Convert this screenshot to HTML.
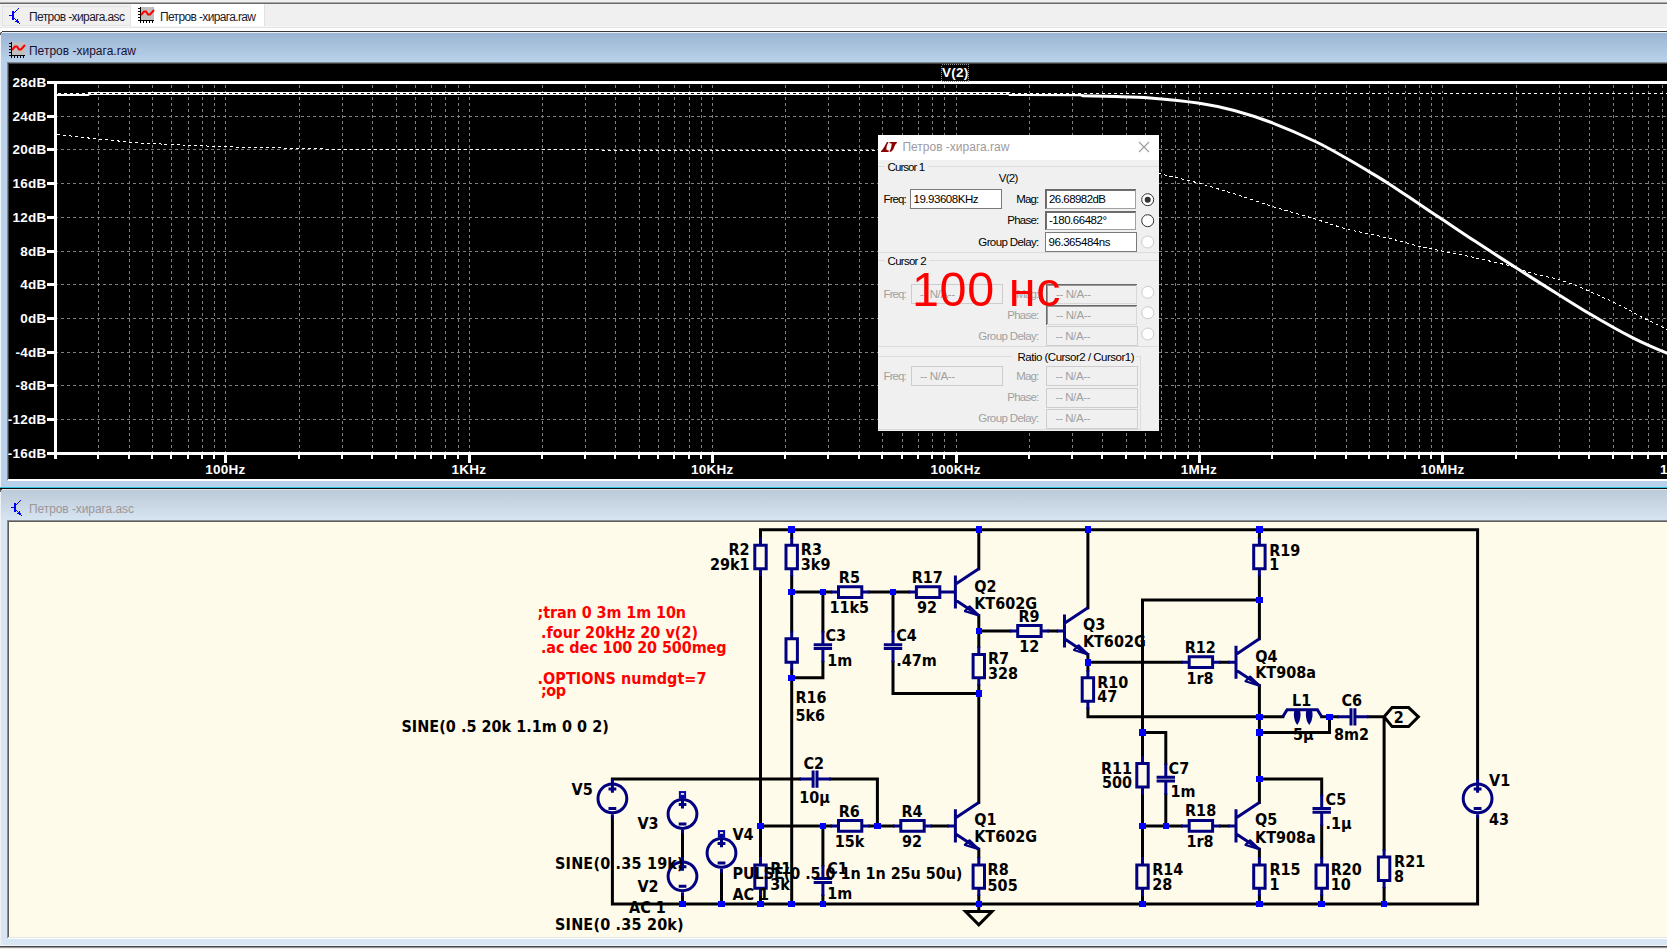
<!DOCTYPE html><html><head><meta charset="utf-8"><title>LTspice</title><style>
html,body{margin:0;padding:0}
body{width:1667px;height:949px;overflow:hidden;background:#f0f0f0;position:relative;font-family:"Liberation Sans",sans-serif}
.abs{position:absolute}
svg{position:absolute;left:0;top:0;overflow:visible}
text{white-space:pre}
.ui{font:12px "Liberation Sans",sans-serif}
.pl{font:bold 13.5px "Liberation Sans",sans-serif;fill:#fff;letter-spacing:0.25px}
.sc{font:bold 16px "DejaVu Sans Condensed","DejaVu Sans","Liberation Sans",sans-serif;fill:#000}
.dl{font:11.5px "Liberation Sans",sans-serif;fill:#000}
</style></head><body>
<div class="abs" style="left:0px;top:0px;width:1667px;height:2px;background:#efefef;"></div>
<div class="abs" style="left:0px;top:2px;width:1667px;height:1px;background:#a8a8a8;"></div>
<div class="abs" style="left:0px;top:3px;width:1667px;height:1px;background:#6a6a6a;"></div>
<div class="abs" style="left:0px;top:4px;width:1667px;height:24px;background:#f0f0f0;"></div>
<div class="abs" style="left:2px;top:6px;width:129px;height:20px;background:#f0f0f0;box-sizing:border-box;border:1px solid #e2e2e2;"></div>
<div class="abs" style="left:131px;top:4px;width:133px;height:22px;background:#ffffff;"></div>
<div class="abs" style="left:264px;top:5px;width:1px;height:21px;background:#e0e0e0;"></div>
<div class="abs" style="left:0px;top:26px;width:1667px;height:1px;background:#f6f6f6;"></div>
<div class="abs" style="left:0px;top:27px;width:1667px;height:1px;background:#e4e4e4;"></div>
<div class="abs" style="left:0px;top:28px;width:1667px;height:3px;background:#ffffff;"></div>
<div class="abs" style="left:0px;top:31px;width:1667px;height:1px;background:#3c3c3c;"></div>
<div class="abs" style="left:0px;top:32px;width:1667px;height:1px;background:#e8eef6;"></div>
<div class="abs" style="left:0px;top:33px;width:1667px;height:29px;background:linear-gradient(#9ab4d3,#bad2ea);"></div>
<div class="abs" style="left:0px;top:62px;width:1667px;height:419px;background:#b9d1ea;"></div>
<div class="abs" style="left:0px;top:33px;width:1px;height:454px;background:#f0f3f7;"></div>
<div class="abs" style="left:7px;top:62px;width:1660px;height:1px;background:#7c8894;"></div>
<div class="abs" style="left:7px;top:62px;width:1px;height:418px;background:#808890;"></div>
<div class="abs" style="left:8px;top:63px;width:1659px;height:1px;background:#404040;"></div>
<div class="abs" style="left:8px;top:63px;width:1px;height:417px;background:#404040;"></div>
<div class="abs" style="left:9px;top:64px;width:1658px;height:415px;background:#000;"></div>
<div class="abs" style="left:8px;top:479px;width:1659px;height:2px;background:#ffffff;"></div>
<div class="abs" style="left:0px;top:481px;width:1667px;height:6px;background:#b9d1ea;"></div>
<div class="abs" style="left:0px;top:487px;width:1667px;height:1px;background:#2fc3dc;"></div>
<div class="abs" style="left:0px;top:488px;width:1667px;height:1px;background:#101010;"></div>
<div class="abs" style="left:0px;top:481px;width:1px;height:6px;background:#f0f3f7;"></div>
<div class="abs" style="left:0px;top:31px;width:2px;height:1px;background:#ffffff;"></div>
<div class="abs" style="left:1px;top:32px;width:1px;height:1px;background:#555;"></div>
<div class="abs" style="left:0px;top:32px;width:1px;height:1px;background:#aaa;"></div>
<div class="abs" style="left:0px;top:33px;width:1px;height:2px;background:#555;"></div>
<div class="abs" style="left:0px;top:489px;width:1667px;height:1px;background:#dfe6ee;"></div>
<div class="abs" style="left:0px;top:490px;width:1667px;height:30px;background:linear-gradient(#bccad9,#d7e4f1);"></div>
<div class="abs" style="left:0px;top:520px;width:1667px;height:426px;background:#d8e5f3;"></div>
<div class="abs" style="left:0px;top:490px;width:1px;height:456px;background:#eef1f5;"></div>
<div class="abs" style="left:0px;top:489px;width:2px;height:1px;background:#444;"></div>
<div class="abs" style="left:0px;top:490px;width:1px;height:2px;background:#666;"></div>
<div class="abs" style="left:7px;top:520px;width:1660px;height:1px;background:#8a8d90;"></div>
<div class="abs" style="left:7px;top:520px;width:1px;height:418px;background:#8a8d90;"></div>
<div class="abs" style="left:8px;top:521px;width:1659px;height:1px;background:#5c5c5c;"></div>
<div class="abs" style="left:8px;top:521px;width:1px;height:416px;background:#5c5c5c;"></div>
<div class="abs" style="left:9px;top:522px;width:1658px;height:415px;background:#fffbeb;"></div>
<div class="abs" style="left:8px;top:937px;width:1659px;height:1px;background:#e6e6e6;"></div>
<div class="abs" style="left:8px;top:938px;width:1659px;height:1px;background:#ffffff;"></div>
<div class="abs" style="left:0px;top:945px;width:1667px;height:1px;background:#f2f5fa;"></div>
<div class="abs" style="left:0px;top:946px;width:1667px;height:1px;background:#444444;"></div>
<div class="abs" style="left:0px;top:947px;width:1667px;height:1px;background:#9a9a9a;"></div>
<div class="abs" style="left:0px;top:948px;width:1667px;height:1px;background:#e8e8e8;"></div>
<svg width="1667" height="949"><g transform="translate(7,7)" fill="#0000ff" shape-rendering="crispEdges"><rect x="2" y="8" width="1" height="1"/><rect x="3" y="8" width="1" height="1"/><rect x="4" y="8" width="1" height="1"/><rect x="5" y="4" width="1" height="1"/><rect x="5" y="5" width="1" height="1"/><rect x="5" y="6" width="1" height="1"/><rect x="5" y="7" width="1" height="1"/><rect x="5" y="8" width="1" height="1"/><rect x="5" y="9" width="1" height="1"/><rect x="5" y="10" width="1" height="1"/><rect x="5" y="11" width="1" height="1"/><rect x="5" y="12" width="1" height="1"/><rect x="6" y="4" width="1" height="1"/><rect x="6" y="5" width="1" height="1"/><rect x="6" y="6" width="1" height="1"/><rect x="6" y="7" width="1" height="1"/><rect x="6" y="8" width="1" height="1"/><rect x="6" y="9" width="1" height="1"/><rect x="6" y="10" width="1" height="1"/><rect x="6" y="11" width="1" height="1"/><rect x="6" y="12" width="1" height="1"/><rect x="7" y="5" width="1" height="1"/><rect x="8" y="4" width="1" height="1"/><rect x="9" y="3" width="1" height="1"/><rect x="10" y="2" width="1" height="1"/><rect x="11" y="1" width="1" height="1"/><rect x="7" y="11" width="1" height="1"/><rect x="8" y="12" width="1" height="1"/><rect x="9" y="13" width="1" height="1"/><rect x="10" y="14" width="1" height="1"/><rect x="11" y="15" width="1" height="1"/><rect x="12" y="16" width="1" height="1"/><rect x="10" y="12" width="1" height="1"/><rect x="10" y="13" width="1" height="1"/><rect x="8" y="14" width="1" height="1"/><rect x="9" y="14" width="1" height="1"/><rect x="10" y="15" width="1" height="1"/><rect x="11" y="14" width="1" height="1"/></g><g transform="translate(138,7)" shape-rendering="crispEdges"><rect x="3" y="0" width="13" height="13" fill="#c0c0c0"/><rect x="2" y="0" width="1" height="16" fill="#000"/><rect x="0" y="13" width="16" height="1" fill="#000"/><rect x="0" y="1" width="2" height="1" fill="#000"/><rect x="2" y="14" width="1" height="2" fill="#000"/><rect x="0" y="4" width="2" height="1" fill="#000"/><rect x="5" y="14" width="1" height="2" fill="#000"/><rect x="0" y="7" width="2" height="1" fill="#000"/><rect x="8" y="14" width="1" height="2" fill="#000"/><rect x="0" y="10" width="2" height="1" fill="#000"/><rect x="11" y="14" width="1" height="2" fill="#000"/><rect x="0" y="13" width="2" height="1" fill="#000"/><rect x="14" y="14" width="1" height="2" fill="#000"/><polyline points="3,8 6,4.5 8,4.5 10,7.5 12,7.5 16,3" fill="none" stroke="#ff0000" stroke-width="2" shape-rendering="auto"/></g><g transform="translate(9,42)" shape-rendering="crispEdges"><rect x="3" y="0" width="13" height="13" fill="#c0c0c0"/><rect x="2" y="0" width="1" height="16" fill="#000"/><rect x="0" y="13" width="16" height="1" fill="#000"/><rect x="0" y="1" width="2" height="1" fill="#000"/><rect x="2" y="14" width="1" height="2" fill="#000"/><rect x="0" y="4" width="2" height="1" fill="#000"/><rect x="5" y="14" width="1" height="2" fill="#000"/><rect x="0" y="7" width="2" height="1" fill="#000"/><rect x="8" y="14" width="1" height="2" fill="#000"/><rect x="0" y="10" width="2" height="1" fill="#000"/><rect x="11" y="14" width="1" height="2" fill="#000"/><rect x="0" y="13" width="2" height="1" fill="#000"/><rect x="14" y="14" width="1" height="2" fill="#000"/><polyline points="3,8 6,4.5 8,4.5 10,7.5 12,7.5 16,3" fill="none" stroke="#ff0000" stroke-width="2" shape-rendering="auto"/></g><g transform="translate(9,499)" fill="#0000ff" shape-rendering="crispEdges"><rect x="2" y="8" width="1" height="1"/><rect x="3" y="8" width="1" height="1"/><rect x="4" y="8" width="1" height="1"/><rect x="5" y="4" width="1" height="1"/><rect x="5" y="5" width="1" height="1"/><rect x="5" y="6" width="1" height="1"/><rect x="5" y="7" width="1" height="1"/><rect x="5" y="8" width="1" height="1"/><rect x="5" y="9" width="1" height="1"/><rect x="5" y="10" width="1" height="1"/><rect x="5" y="11" width="1" height="1"/><rect x="5" y="12" width="1" height="1"/><rect x="6" y="4" width="1" height="1"/><rect x="6" y="5" width="1" height="1"/><rect x="6" y="6" width="1" height="1"/><rect x="6" y="7" width="1" height="1"/><rect x="6" y="8" width="1" height="1"/><rect x="6" y="9" width="1" height="1"/><rect x="6" y="10" width="1" height="1"/><rect x="6" y="11" width="1" height="1"/><rect x="6" y="12" width="1" height="1"/><rect x="7" y="5" width="1" height="1"/><rect x="8" y="4" width="1" height="1"/><rect x="9" y="3" width="1" height="1"/><rect x="10" y="2" width="1" height="1"/><rect x="11" y="1" width="1" height="1"/><rect x="7" y="11" width="1" height="1"/><rect x="8" y="12" width="1" height="1"/><rect x="9" y="13" width="1" height="1"/><rect x="10" y="14" width="1" height="1"/><rect x="11" y="15" width="1" height="1"/><rect x="12" y="16" width="1" height="1"/><rect x="10" y="12" width="1" height="1"/><rect x="10" y="13" width="1" height="1"/><rect x="8" y="14" width="1" height="1"/><rect x="9" y="14" width="1" height="1"/><rect x="10" y="15" width="1" height="1"/><rect x="11" y="14" width="1" height="1"/></g><text x="29.0" y="21.0" class="ui" textLength="96.0" style="fill:#1a1a2a">Петров -хирага.asc</text><text x="160.0" y="21.0" class="ui" textLength="96.0" style="fill:#1a1a2a">Петров -хирага.raw</text><text x="29.0" y="55.0" class="ui" textLength="107.0" style="fill:#1a1030">Петров -хирага.raw</text><text x="29.0" y="513.0" class="ui" textLength="105.0" style="fill:#9c9799">Петров -хирага.asc</text></svg>
<svg width="1667" height="949"><defs><clipPath id="pc"><rect x="57" y="84" width="1610" height="368"/></clipPath></defs><path d="M98.5 85V452M129.5 85V452M152.5 85V452M171.5 85V452M188.5 85V452M202.5 85V452M214.5 85V452M225.5 85V452M299.5 85V452M342.5 85V452M372.5 85V452M396.5 85V452M415.5 85V452M431.5 85V452M445.5 85V452M458.5 85V452M469.5 85V452M542.5 85V452M585.5 85V452M615.5 85V452M639.5 85V452M658.5 85V452M674.5 85V452M689.5 85V452M701.5 85V452M712.5 85V452M785.5 85V452M828.5 85V452M859.5 85V452M882.5 85V452M902.5 85V452M918.5 85V452M932.5 85V452M944.5 85V452M956.5 85V452M1029.5 85V452M1072.5 85V452M1102.5 85V452M1126.5 85V452M1145.5 85V452M1161.5 85V452M1175.5 85V452M1188.5 85V452M1199.5 85V452M1272.5 85V452M1315.5 85V452M1346.5 85V452M1369.5 85V452M1388.5 85V452M1405.5 85V452M1419.5 85V452M1431.5 85V452M1442.5 85V452M1516.5 85V452M1559.5 85V452M1589.5 85V452M1613.5 85V452M1632.5 85V452M1648.5 85V452M1662.5 85V452" stroke="#808080" stroke-width="1" stroke-dasharray="3 3" fill="none" shape-rendering="crispEdges"/><path d="M57 116.5H1667M57 149.5H1667M57 183.5H1667M57 217.5H1667M57 251.5H1667M57 284.5H1667M57 318.5H1667M57 352.5H1667M57 385.5H1667M57 419.5H1667" stroke="#808080" stroke-width="1" stroke-dasharray="3 3" stroke-dashoffset="2" fill="none" shape-rendering="crispEdges"/><g fill="#fff" shape-rendering="crispEdges"><rect x="54" y="81" width="3" height="374"/><rect x="47" y="81" width="1620" height="3"/><rect x="47" y="452" width="1620" height="3"/><rect x="47" y="115" width="8" height="3"/><rect x="47" y="148" width="8" height="3"/><rect x="47" y="182" width="8" height="3"/><rect x="47" y="216" width="8" height="3"/><rect x="47" y="250" width="8" height="3"/><rect x="47" y="283" width="8" height="3"/><rect x="47" y="317" width="8" height="3"/><rect x="47" y="351" width="8" height="3"/><rect x="47" y="384" width="8" height="3"/><rect x="47" y="418" width="8" height="3"/><rect x="54" y="455" width="2" height="4"/><rect x="97" y="455" width="2" height="4"/><rect x="128" y="455" width="2" height="4"/><rect x="151" y="455" width="2" height="4"/><rect x="170" y="455" width="2" height="4"/><rect x="187" y="455" width="2" height="4"/><rect x="201" y="455" width="2" height="4"/><rect x="213" y="455" width="2" height="4"/><rect x="224" y="455" width="3" height="8"/><rect x="298" y="455" width="2" height="4"/><rect x="341" y="455" width="2" height="4"/><rect x="371" y="455" width="2" height="4"/><rect x="395" y="455" width="2" height="4"/><rect x="414" y="455" width="2" height="4"/><rect x="430" y="455" width="2" height="4"/><rect x="444" y="455" width="2" height="4"/><rect x="457" y="455" width="2" height="4"/><rect x="468" y="455" width="3" height="8"/><rect x="541" y="455" width="2" height="4"/><rect x="584" y="455" width="2" height="4"/><rect x="614" y="455" width="2" height="4"/><rect x="638" y="455" width="2" height="4"/><rect x="657" y="455" width="2" height="4"/><rect x="673" y="455" width="2" height="4"/><rect x="688" y="455" width="2" height="4"/><rect x="700" y="455" width="2" height="4"/><rect x="711" y="455" width="3" height="8"/><rect x="784" y="455" width="2" height="4"/><rect x="827" y="455" width="2" height="4"/><rect x="858" y="455" width="2" height="4"/><rect x="881" y="455" width="2" height="4"/><rect x="901" y="455" width="2" height="4"/><rect x="917" y="455" width="2" height="4"/><rect x="931" y="455" width="2" height="4"/><rect x="943" y="455" width="2" height="4"/><rect x="955" y="455" width="3" height="8"/><rect x="1028" y="455" width="2" height="4"/><rect x="1071" y="455" width="2" height="4"/><rect x="1101" y="455" width="2" height="4"/><rect x="1125" y="455" width="2" height="4"/><rect x="1144" y="455" width="2" height="4"/><rect x="1160" y="455" width="2" height="4"/><rect x="1174" y="455" width="2" height="4"/><rect x="1187" y="455" width="2" height="4"/><rect x="1198" y="455" width="3" height="8"/><rect x="1271" y="455" width="2" height="4"/><rect x="1314" y="455" width="2" height="4"/><rect x="1345" y="455" width="2" height="4"/><rect x="1368" y="455" width="2" height="4"/><rect x="1387" y="455" width="2" height="4"/><rect x="1404" y="455" width="2" height="4"/><rect x="1418" y="455" width="2" height="4"/><rect x="1430" y="455" width="2" height="4"/><rect x="1441" y="455" width="3" height="8"/><rect x="1515" y="455" width="2" height="4"/><rect x="1558" y="455" width="2" height="4"/><rect x="1588" y="455" width="2" height="4"/><rect x="1612" y="455" width="2" height="4"/><rect x="1631" y="455" width="2" height="4"/><rect x="1647" y="455" width="2" height="4"/><rect x="1661" y="455" width="2" height="4"/><rect x="54" y="455" width="3" height="4"/></g><text x="46.6" y="86.9" class="pl" text-anchor="end">28dB</text><text x="46.6" y="120.9" class="pl" text-anchor="end">24dB</text><text x="46.6" y="153.9" class="pl" text-anchor="end">20dB</text><text x="46.6" y="187.9" class="pl" text-anchor="end">16dB</text><text x="46.6" y="221.9" class="pl" text-anchor="end">12dB</text><text x="46.6" y="255.9" class="pl" text-anchor="end">8dB</text><text x="46.6" y="288.9" class="pl" text-anchor="end">4dB</text><text x="46.6" y="322.9" class="pl" text-anchor="end">0dB</text><text x="46.6" y="356.9" class="pl" text-anchor="end">-4dB</text><text x="46.6" y="389.9" class="pl" text-anchor="end">-8dB</text><text x="46.6" y="423.9" class="pl" text-anchor="end">-12dB</text><text x="46.6" y="457.9" class="pl" text-anchor="end">-16dB</text><text x="225.4" y="474.0" class="pl" text-anchor="middle">100Hz</text><text x="468.8" y="474.0" class="pl" text-anchor="middle">1KHz</text><text x="712.2" y="474.0" class="pl" text-anchor="middle">10KHz</text><text x="955.6" y="474.0" class="pl" text-anchor="middle">100KHz</text><text x="1199.0" y="474.0" class="pl" text-anchor="middle">1MHz</text><text x="1442.4" y="474.0" class="pl" text-anchor="middle">10MHz</text><text x="1685.8" y="474.0" class="pl" text-anchor="middle">100MHz</text><rect x="941.5" y="64.5" width="27" height="17" fill="none" stroke="#909090" stroke-dasharray="1 1" shape-rendering="crispEdges"/><text x="955.3" y="77.2" class="pl" text-anchor="middle">V(2)</text><path d="M57 94.6 L88 94.6 L89 93.6 L1009 93.6 L1010 94.6 L1081 94.8 L1083 95.7 L1116 96.6C1121.7 96.8 1136.1 96.8 1150.0 97.9C1163.9 99.0 1185.5 101.1 1199.5 103.2C1213.5 105.3 1222.2 107.2 1234.3 110.5C1246.4 113.8 1258.7 117.6 1272.2 122.8C1285.7 128.0 1303.1 135.6 1315.4 141.5C1327.7 147.4 1337.0 153.0 1345.9 158.0C1354.8 163.0 1362.0 167.4 1369.0 171.6C1376.0 175.8 1379.6 177.8 1388.0 183.2C1396.4 188.6 1410.6 198.3 1419.6 204.3C1428.6 210.3 1432.9 213.2 1442.1 219.3C1451.3 225.4 1462.4 233.0 1474.8 241.1C1487.2 249.2 1502.5 259.1 1516.5 268.1C1530.5 277.1 1546.9 287.3 1559.1 294.9C1571.3 302.5 1580.6 308.4 1589.7 313.8C1598.8 319.2 1606.4 323.5 1613.5 327.5C1620.6 331.5 1626.5 334.6 1632.4 337.6C1638.3 340.6 1642.9 342.8 1648.7 345.4C1654.5 348.0 1661.8 351.1 1667.0 353.2C1672.2 355.3 1677.8 357.2 1680.0 358.0" stroke="#fff" stroke-width="3" fill="none" clip-path="url(#pc)"/><path d="M57 93.5H1667" stroke="#000" stroke-width="1" shape-rendering="crispEdges"/><path d="M57 93.5H1667" stroke="#fff" stroke-width="1" stroke-dasharray="3 3" stroke-dashoffset="5" shape-rendering="crispEdges"/><path d="M57 134.4 L99 139.2 L140 143 L176 144.7 L228.8 146.9 L296 148.3 L344 149.5 L600 149.5 L601 150.5 L1000 150.5 L1040 152 L1080 156 L1120 164 L1159.5 173.7 L1199.5 183.2 L1234.3 193.8 L1272.2 206.4 L1315.4 219 L1345.9 229.1 L1388 238 L1419.6 246.4 L1450 252.7 L1474.8 257.6 L1508.5 265.4 L1529.6 272.7 L1557 279 L1576 285.4 L1599 295.5 L1622.3 306.4 L1643.4 318 L1665.5 328.6 L1680 336" stroke="#fff" stroke-width="1" stroke-dasharray="3 3" fill="none" shape-rendering="crispEdges"/></svg>
<svg width="1667" height="949"><rect x="878" y="135" width="281" height="296" fill="#f0f0f0"/><rect x="878" y="135" width="281" height="25" fill="#ffffff"/><g fill="#8b0000"><path d="M887 142C885 145 883.5 149 881 151.2L881 152L888.5 152L888.9 150.6L886.6 150C886 147.5 887 144.5 888.7 142.2Z"/><path d="M889.8 142L897 142L896.6 143.2C895 144.5 894.6 146 894.2 147.2C893.4 149.6 892 151.4 890 152L889.5 151.2C890.6 149.8 891 148.2 891.2 147C891.5 145.6 891.8 144.4 891.6 143.6C890.8 143.2 890 143.2 889.3 143.2Z"/></g><text x="902.4" y="151.0" class="ui" textLength="107.0" style="fill:#a09a9e">Петров -хирага.raw</text><path d="M1139 142 L1149 152 M1149 142 L1139 152" stroke="#9a9a9a" stroke-width="1.1" fill="none"/><path d="M878 166.5H885M928 166.5H1159M878 252.5H1159M878 260.5H885M929 260.5H1159M878 346.5H1159M878 356.5H1012M1136 356.5H1141M1140.5 356V429M878 429.5H1141" stroke="#dcdcdc" stroke-width="1" fill="none" shape-rendering="crispEdges"/><text x="887.6" y="171.0" class="dl" textLength="37.5">Cursor 1</text><text x="887.6" y="265.0" class="dl" textLength="39.0">Cursor 2</text><text x="1017.5" y="361.0" class="dl" textLength="117.0">Ratio (Cursor2 / Cursor1)</text><text x="1008.6" y="182.3" class="dl" text-anchor="middle" textLength="19.5">V(2)</text><text x="883.6" y="203.0" class="dl" textLength="23.0">Freq:</text><g shape-rendering="crispEdges"><rect x="910.5" y="189.5" width="91" height="19" fill="#fff" stroke="#7a7a7a"/></g><text x="913.5" y="203.0" class="dl" textLength="65.0">19.93608KHz</text><text x="1039.3" y="203.0" class="dl" text-anchor="end" textLength="23.0">Mag:</text><g shape-rendering="crispEdges"><rect x="1045.5" y="189.5" width="90" height="19" fill="#fff" stroke="#a0a0a0"/><path d="M1045.5 209V189.5H1136" stroke="#696969" fill="none"/><path d="M1046.5 208V190.5H1135" stroke="#6e6e6e" fill="none"/></g><text x="1049.0" y="203.0" class="dl" textLength="57.0">26.68982dB</text><text x="1039.3" y="224.0" class="dl" text-anchor="end" textLength="32.0">Phase:</text><g shape-rendering="crispEdges"><rect x="1045.5" y="211.5" width="90" height="18" fill="#fff" stroke="#a0a0a0"/><path d="M1045.5 230V211.5H1136" stroke="#696969" fill="none"/><path d="M1046.5 229V212.5H1135" stroke="#6e6e6e" fill="none"/></g><text x="1049.0" y="224.0" class="dl" textLength="58.0">-180.66482°</text><text x="1039.3" y="245.5" class="dl" text-anchor="end" textLength="61.0">Group Delay:</text><g shape-rendering="crispEdges"><rect x="1045.5" y="232.5" width="91" height="19" fill="#fff" stroke="#7a7a7a"/></g><text x="1048.5" y="245.5" class="dl" textLength="62.0">96.365484ns</text><circle cx="1147.7" cy="199.7" r="6" fill="#fff" stroke="#333" stroke-width="1"/><circle cx="1147.7" cy="199.7" r="3" fill="#333"/><circle cx="1147.7" cy="220.7" r="6" fill="#fff" stroke="#333" stroke-width="1"/><circle cx="1147.7" cy="242" r="6" fill="#fff" stroke="#cccccc" stroke-width="1"/><circle cx="1147.8" cy="292.3" r="6" fill="#fff" stroke="#cccccc" stroke-width="1"/><circle cx="1147.8" cy="312.8" r="6" fill="#fff" stroke="#cccccc" stroke-width="1"/><circle cx="1147.8" cy="334" r="6" fill="#fff" stroke="#cccccc" stroke-width="1"/><text x="883.6" y="298.0" class="dl" textLength="23.0" style="fill:#a0a0a0">Freq:</text><g shape-rendering="crispEdges"><rect x="911.5" y="284.5" width="91" height="19" fill="#f0f0f0" stroke="#cdcdcd"/></g><text x="920.0" y="298.0" class="dl" textLength="35.0" style="fill:#a0a0a0">-- N/A--</text><text x="1039.3" y="298.0" class="dl" text-anchor="end" textLength="23.0" style="fill:#a0a0a0">Mag:</text><g shape-rendering="crispEdges"><rect x="1046.5" y="284.5" width="90" height="19" fill="#f0f0f0" stroke="#d8d8d8"/><path d="M1046.5 304V284.5H1137" stroke="#696969" fill="none"/><path d="M1047.5 303V285.5H1136" stroke="#9a9a9a" fill="none"/></g><text x="1056.0" y="298.0" class="dl" textLength="35.0" style="fill:#a0a0a0">-- N/A--</text><text x="1039.3" y="319.0" class="dl" text-anchor="end" textLength="32.0" style="fill:#a0a0a0">Phase:</text><g shape-rendering="crispEdges"><rect x="1046.5" y="305.5" width="90" height="19" fill="#f0f0f0" stroke="#d8d8d8"/><path d="M1046.5 325V305.5H1137" stroke="#696969" fill="none"/><path d="M1047.5 324V306.5H1136" stroke="#9a9a9a" fill="none"/></g><text x="1056.0" y="319.0" class="dl" textLength="35.0" style="fill:#a0a0a0">-- N/A--</text><text x="1039.3" y="340.0" class="dl" text-anchor="end" textLength="61.0" style="fill:#a0a0a0">Group Delay:</text><g shape-rendering="crispEdges"><rect x="1046.5" y="326.5" width="91" height="19" fill="#f0f0f0" stroke="#cdcdcd"/></g><text x="1055.5" y="340.0" class="dl" textLength="35.0" style="fill:#a0a0a0">-- N/A--</text><text x="883.6" y="380.0" class="dl" textLength="23.0" style="fill:#a0a0a0">Freq:</text><g shape-rendering="crispEdges"><rect x="911.5" y="366.5" width="91" height="19" fill="#f0f0f0" stroke="#cdcdcd"/></g><text x="920.0" y="380.0" class="dl" textLength="35.0" style="fill:#a0a0a0">-- N/A--</text><text x="1039.3" y="380.0" class="dl" text-anchor="end" textLength="23.0" style="fill:#a0a0a0">Mag:</text><g shape-rendering="crispEdges"><rect x="1046.5" y="366.5" width="91" height="19" fill="#f0f0f0" stroke="#cdcdcd"/></g><text x="1055.5" y="380.0" class="dl" textLength="35.0" style="fill:#a0a0a0">-- N/A--</text><text x="1039.3" y="401.0" class="dl" text-anchor="end" textLength="32.0" style="fill:#a0a0a0">Phase:</text><g shape-rendering="crispEdges"><rect x="1046.5" y="388.5" width="91" height="19" fill="#f0f0f0" stroke="#cdcdcd"/></g><text x="1055.5" y="401.0" class="dl" textLength="35.0" style="fill:#a0a0a0">-- N/A--</text><text x="1039.3" y="422.0" class="dl" text-anchor="end" textLength="61.0" style="fill:#a0a0a0">Group Delay:</text><g shape-rendering="crispEdges"><rect x="1046.5" y="409.5" width="91" height="19" fill="#f0f0f0" stroke="#cdcdcd"/></g><text x="1055.5" y="422.0" class="dl" textLength="35.0" style="fill:#a0a0a0">-- N/A--</text><text x="912" y="305.6" style="font:48.5px 'Liberation Sans',sans-serif" fill="#ff0000" textLength="148.5">100 нс</text></svg>
<svg width="1667" height="949"><path d="M760.5 529.7 L1477.6 529.7M612.4 903.9 L1477.6 903.9M760.5 529.7 L760.5 537.5M760.5 576.5 L760.5 857.1M760.5 896.1 L760.5 903.9M791.7 529.7 L791.7 537.5M791.7 576.5 L791.7 631.0M791.7 670.0 L791.7 903.9M791.7 592.1 L830.7 592.1M869.6 592.1 L908.6 592.1M822.9 592.1 L822.9 631.0M822.9 662.2 L822.9 677.8 L791.7 677.8M893.0 592.1 L893.0 631.0M893.0 662.2 L893.0 693.4 L978.8 693.4M978.8 529.7 L978.8 568.7M978.8 615.4 L978.8 646.6M978.8 685.6 L978.8 802.5M978.8 631.0 L1009.9 631.0M1048.9 631.0 L1056.7 631.0M1087.9 529.7 L1087.9 607.7M1087.9 654.4 L1087.9 670.0M1087.9 662.2 L1181.4 662.2M1220.4 662.2 L1228.2 662.2M1087.9 709.0 L1087.9 716.8 L1282.8 716.8M1259.4 529.7 L1259.4 537.5M1259.4 576.5 L1259.4 638.8M1259.4 599.9 L1142.5 599.9 L1142.5 755.8M1142.5 794.7 L1142.5 857.1M1142.5 896.1 L1142.5 903.9M1142.5 732.4 L1165.8 732.4 L1165.8 763.6M1165.8 794.7 L1165.8 825.9M1142.5 825.9 L1181.4 825.9M1220.4 825.9 L1228.2 825.9M1259.4 685.6 L1259.4 802.5M1259.4 849.3 L1259.4 857.1M1259.4 896.1 L1259.4 903.9M1321.7 716.8 L1337.3 716.8M1368.5 716.8 L1384.1 716.8M1259.4 732.4 L1329.5 732.4 L1329.5 716.8M1384.1 716.8 L1384.1 849.3M1384.1 888.3 L1384.1 903.9M1259.4 779.1 L1321.7 779.1 L1321.7 794.7M1321.7 825.9 L1321.7 857.1M1321.7 896.1 L1321.7 903.9M1477.6 529.7 L1477.6 779.1M1477.6 818.1 L1477.6 903.9M612.4 779.1 L799.5 779.1M830.7 779.1 L877.4 779.1 L877.4 825.9M612.4 818.1 L612.4 903.9M682.5 833.7 L682.5 857.1M682.5 896.1 L682.5 903.9M721.5 872.7 L721.5 903.9M760.5 825.9 L830.7 825.9M869.6 825.9 L893.0 825.9M932.0 825.9 L947.6 825.9M822.9 825.9 L822.9 864.9M822.9 896.1 L822.9 903.9M978.8 849.3 L978.8 857.1M978.8 896.1 L978.8 903.9M978.8 903.9V911.5M965.6 911.5H992.0L978.8 924.8ZM1384.1 716.8L1392.1 707.6H1408.6L1418.4 716.8L1408.6 726.6H1392.1Z" stroke="#000" stroke-width="3" fill="none" stroke-linecap="square" stroke-linejoin="miter"/><g stroke="#000080" stroke-width="3" fill="none" stroke-linecap="butt" stroke-linejoin="miter"><path d="M760.5 537.5V545.3M760.5 568.7V576.5M754.8 545.3H766.2V568.7H754.8ZM791.7 537.5V545.3M791.7 568.7V576.5M786.0 545.3H797.4V568.7H786.0ZM791.7 631.0V638.8M791.7 662.2V670.0M786.0 638.8H797.4V662.2H786.0ZM978.8 646.6V654.4M978.8 677.8V685.6M973.1 654.4H984.5V677.8H973.1ZM1087.9 670.0V677.8M1087.9 701.2V709.0M1082.2 677.8H1093.6V701.2H1082.2ZM1259.4 537.5V545.3M1259.4 568.7V576.5M1253.7 545.3H1265.1V568.7H1253.7ZM1142.5 755.8V763.6M1142.5 786.9V794.7M1136.8 763.6H1148.2V786.9H1136.8ZM1142.5 857.1V864.9M1142.5 888.3V896.1M1136.8 864.9H1148.2V888.3H1136.8ZM1259.4 857.1V864.9M1259.4 888.3V896.1M1253.7 864.9H1265.1V888.3H1253.7ZM1321.7 857.1V864.9M1321.7 888.3V896.1M1316.0 864.9H1327.4V888.3H1316.0ZM1384.1 849.3V857.1M1384.1 880.5V888.3M1378.4 857.1H1389.8V880.5H1378.4ZM760.5 857.1V864.9M760.5 888.3V896.1M754.8 864.9H766.2V888.3H754.8ZM978.8 857.1V864.9M978.8 888.3V896.1M973.1 864.9H984.5V888.3H973.1ZM830.7 592.1H838.5M861.8 592.1H869.6M838.5 586.7V597.5H861.8V586.7ZM908.6 592.1H916.4M939.8 592.1H947.6M916.4 586.7V597.5H939.8V586.7ZM1009.9 631.0H1017.7M1041.1 631.0H1048.9M1017.7 625.6V636.4H1041.1V625.6ZM1181.4 662.2H1189.2M1212.6 662.2H1220.4M1189.2 656.8V667.6H1212.6V656.8ZM1181.4 825.9H1189.2M1212.6 825.9H1220.4M1189.2 820.5V831.3H1212.6V820.5ZM830.7 825.9H838.5M861.8 825.9H869.6M838.5 820.5V831.3H861.8V820.5ZM893.0 825.9H900.8M924.2 825.9H932.0M900.8 820.5V831.3H924.2V820.5ZM822.9 631.0V644.7M822.9 648.6V662.2M813.7 644.7H832.1M813.7 648.6H832.1M893.0 631.0V644.7M893.0 648.6V662.2M883.8 644.7H902.2M883.8 648.6H902.2M1165.8 763.6V777.2M1165.8 781.1V794.7M1156.6 777.2H1175.0M1156.6 781.1H1175.0M1321.7 794.7V808.4M1321.7 812.3V825.9M1312.5 808.4H1330.9M1312.5 812.3H1330.9M822.9 864.9V878.5M822.9 882.4V896.1M813.7 878.5H832.1M813.7 882.4H832.1M799.5 779.1H813.1M817.0 779.1H830.7M813.1 770.5V787.7M817.0 770.5V787.7M1337.3 716.8H1351.0M1354.9 716.8H1368.5M1351.0 708.2V725.4M1354.9 708.2V725.4M955.4 575.5L955.4 608.6M947.6 592.1L955.4 592.1M955.4 584.3L978.8 568.7M955.4 599.9L978.8 615.4M1064.5 614.5L1064.5 647.6M1056.7 631.0L1064.5 631.0M1064.5 623.2L1087.9 607.7M1064.5 638.8L1087.9 654.4M1236.0 645.7L1236.0 678.8M1228.2 662.2L1236.0 662.2M1236.0 654.4L1259.4 638.8M1236.0 670.0L1259.4 685.6M1236.0 809.3L1236.0 842.5M1228.2 825.9L1236.0 825.9M1236.0 818.1L1259.4 802.5M1236.0 833.7L1259.4 849.3M955.4 809.3L955.4 842.5M947.6 825.9L955.4 825.9M955.4 818.1L978.8 802.5M955.4 833.7L978.8 849.3M1477.6 779.1V783.0M1477.6 814.2V818.1M1473.7 788.9H1481.5M1477.6 785.0V792.8M1473.7 808.4H1481.5M612.4 779.1V783.0M612.4 814.2V818.1M608.5 788.9H616.3M612.4 785.0V792.8M608.5 808.4H616.3M682.5 794.7V798.6M682.5 829.8V833.7M678.7 804.5H686.4M682.5 800.6V808.4M678.7 824.0H686.4M682.5 857.1V861.0M682.5 892.2V896.1M678.7 866.8H686.4M682.5 862.9V870.7M678.7 886.3H686.4M721.5 833.7V837.6M721.5 868.8V872.7M717.6 843.4H725.4M721.5 839.6V847.3M717.6 862.9H725.4M1282.8 716.8L1287.1 709.8H1317.4L1321.7 716.8"/><path d="M969.5 606.4L964.9 611.1L978.8 615.4Z" stroke-width="2.2" stroke-linejoin="round"/><path d="M1078.6 645.4L1074.0 650.0L1087.9 654.4Z" stroke-width="2.2" stroke-linejoin="round"/><path d="M1250.1 676.6L1245.5 681.2L1259.4 685.6Z" stroke-width="2.2" stroke-linejoin="round"/><path d="M1250.1 840.3L1245.5 844.9L1259.4 849.3Z" stroke-width="2.2" stroke-linejoin="round"/><path d="M969.5 840.3L964.9 844.9L978.8 849.3Z" stroke-width="2.2" stroke-linejoin="round"/><circle cx="1477.6" cy="798.4" r="14.4"/><circle cx="612.4" cy="798.4" r="14.4"/><circle cx="682.5" cy="814.0" r="14.4"/><rect x="679.9" y="792.1" width="5.2" height="5.2" stroke-width="2" stroke="#0000a8"/><circle cx="682.5" cy="876.3" r="14.4"/><circle cx="721.5" cy="852.9" r="14.4"/><rect x="718.9" y="831.1" width="5.2" height="5.2" stroke-width="2" stroke="#0000a8"/><path d="M1295.4 709.8C1294.4 714.8 1295.2 720.3 1297.2 723.3C1299.2 720.3 1300.0 714.8 1299.0 709.8" fill="#000080" stroke-width="2" stroke-linecap="butt"/><path d="M1307.4 709.8C1306.4 714.8 1307.2 720.3 1309.2 723.3C1311.2 720.3 1312.0 714.8 1311.0 709.8" fill="#000080" stroke-width="2" stroke-linecap="butt"/></g><g fill="#0000ff" shape-rendering="crispEdges"><rect x="788.4" y="526.4" width="6.6" height="6.6"/><rect x="975.5" y="526.4" width="6.6" height="6.6"/><rect x="1084.6" y="526.4" width="6.6" height="6.6"/><rect x="1256.1" y="526.4" width="6.6" height="6.6"/><rect x="788.4" y="588.8" width="6.6" height="6.6"/><rect x="819.6" y="588.8" width="6.6" height="6.6"/><rect x="889.7" y="588.8" width="6.6" height="6.6"/><rect x="788.4" y="674.5" width="6.6" height="6.6"/><rect x="975.5" y="627.7" width="6.6" height="6.6"/><rect x="975.5" y="690.1" width="6.6" height="6.6"/><rect x="1084.6" y="658.9" width="6.6" height="6.6"/><rect x="1256.1" y="596.6" width="6.6" height="6.6"/><rect x="1256.1" y="713.5" width="6.6" height="6.6"/><rect x="1326.2" y="713.5" width="6.6" height="6.6"/><rect x="1256.1" y="729.1" width="6.6" height="6.6"/><rect x="1139.2" y="729.1" width="6.6" height="6.6"/><rect x="1256.1" y="775.8" width="6.6" height="6.6"/><rect x="1139.2" y="822.6" width="6.6" height="6.6"/><rect x="1162.5" y="822.6" width="6.6" height="6.6"/><rect x="757.2" y="822.6" width="6.6" height="6.6"/><rect x="819.6" y="822.6" width="6.6" height="6.6"/><rect x="874.1" y="822.6" width="6.6" height="6.6"/><rect x="679.2" y="900.6" width="6.6" height="6.6"/><rect x="718.2" y="900.6" width="6.6" height="6.6"/><rect x="757.2" y="900.6" width="6.6" height="6.6"/><rect x="788.4" y="900.6" width="6.6" height="6.6"/><rect x="819.6" y="900.6" width="6.6" height="6.6"/><rect x="975.5" y="900.6" width="6.6" height="6.6"/><rect x="1139.2" y="900.6" width="6.6" height="6.6"/><rect x="1256.1" y="900.6" width="6.6" height="6.6"/><rect x="1318.4" y="900.6" width="6.6" height="6.6"/><rect x="1380.8" y="900.6" width="6.6" height="6.6"/></g><text x="537.5" y="617.9" class="sc" textLength="148.6" style="fill:#ff0000">;tran 0 3m 1m 10n</text><text x="541.0" y="637.9" class="sc" textLength="157.0" style="fill:#ff0000">.four 20kHz 20 v(2)</text><text x="541.0" y="653.4" class="sc" textLength="185.5" style="fill:#ff0000">.ac dec 100 20 500meg</text><text x="537.5" y="684.4" class="sc" textLength="169.0" style="fill:#ff0000">.OPTIONS numdgt=7</text><text x="541.0" y="696.4" class="sc" textLength="25.0" style="fill:#ff0000">;op</text><text x="401.4" y="731.9" class="sc" textLength="207.4">SINE(0 .5 20k 1.1m 0 0 2)</text><text x="749.5" y="555.2" class="sc" text-anchor="end">R2</text><text x="749.5" y="570.2" class="sc" text-anchor="end">29k1</text><text x="800.8" y="555.2" class="sc">R3</text><text x="800.8" y="570.2" class="sc">3k9</text><text x="849.4" y="583.3" class="sc" text-anchor="middle">R5</text><text x="849.2" y="613.3" class="sc" text-anchor="middle">11k5</text><text x="927.2" y="583.3" class="sc" text-anchor="middle">R17</text><text x="927.0" y="613.3" class="sc" text-anchor="middle">92</text><text x="974.2" y="592.4" class="sc">Q2</text><text x="974.2" y="608.6" class="sc">KT602G</text><text x="1029.0" y="622.2" class="sc" text-anchor="middle">R9</text><text x="1029.3" y="652.4" class="sc" text-anchor="middle">12</text><text x="825.5" y="640.9" class="sc">C3</text><text x="827.2" y="665.6" class="sc">1m</text><text x="896.3" y="640.9" class="sc">C4</text><text x="896.3" y="665.6" class="sc">.47m</text><text x="988.0" y="664.4" class="sc">R7</text><text x="988.0" y="679.4" class="sc">328</text><text x="795.5" y="703.3" class="sc">R16</text><text x="795.5" y="721.3" class="sc">5k6</text><text x="1082.9" y="630.2" class="sc">Q3</text><text x="1082.9" y="647.3" class="sc">KT602G</text><text x="1269.2" y="555.5" class="sc">R19</text><text x="1269.2" y="570.4" class="sc">1</text><text x="1200.3" y="653.2" class="sc" text-anchor="middle">R12</text><text x="1200.0" y="684.2" class="sc" text-anchor="middle">1r8</text><text x="1255.2" y="661.8" class="sc">Q4</text><text x="1255.2" y="678.3" class="sc">KT908a</text><text x="1097.2" y="688.3" class="sc">R10</text><text x="1097.2" y="702.4" class="sc">47</text><text x="1301.7" y="706.4" class="sc" text-anchor="middle">L1</text><text x="1293.0" y="739.9" class="sc">5µ</text><text x="1351.8" y="706.4" class="sc" text-anchor="middle">C6</text><text x="1351.6" y="739.9" class="sc" text-anchor="middle">8m2</text><text x="1393.8" y="723.3" class="sc">2</text><text x="1132.0" y="774.3" class="sc" text-anchor="end">R11</text><text x="1132.0" y="788.3" class="sc" text-anchor="end">500</text><text x="1168.6" y="774.3" class="sc">C7</text><text x="1170.4" y="797.4" class="sc">1m</text><text x="1200.6" y="816.1" class="sc" text-anchor="middle">R18</text><text x="1200.0" y="847.2" class="sc" text-anchor="middle">1r8</text><text x="1255.0" y="825.3" class="sc">Q5</text><text x="1255.0" y="842.6" class="sc">KT908a</text><text x="1325.6" y="804.6" class="sc">C5</text><text x="1325.6" y="829.0" class="sc">.1µ</text><text x="1152.2" y="875.1" class="sc">R14</text><text x="1152.2" y="890.2" class="sc">28</text><text x="1269.4" y="875.1" class="sc">R15</text><text x="1269.4" y="890.2" class="sc">1</text><text x="1330.7" y="875.1" class="sc">R20</text><text x="1330.7" y="890.2" class="sc">10</text><text x="1394.1" y="867.3" class="sc">R21</text><text x="1394.1" y="882.4" class="sc">8</text><text x="1489.1" y="786.4" class="sc">V1</text><text x="1489.1" y="825.3" class="sc">43</text><text x="813.8" y="769.0" class="sc" text-anchor="middle">C2</text><text x="814.5" y="803.3" class="sc" text-anchor="middle">10µ</text><text x="849.3" y="817.3" class="sc" text-anchor="middle">R6</text><text x="849.6" y="846.9" class="sc" text-anchor="middle">15k</text><text x="912.0" y="817.3" class="sc" text-anchor="middle">R4</text><text x="912.0" y="846.9" class="sc" text-anchor="middle">92</text><text x="974.2" y="825.1" class="sc">Q1</text><text x="974.2" y="842.3" class="sc">KT602G</text><text x="987.6" y="875.0" class="sc">R8</text><text x="987.6" y="890.6" class="sc">505</text><text x="571.6" y="795.1" class="sc">V5</text><text x="637.4" y="829.1" class="sc">V3</text><text x="732.4" y="840.4" class="sc">V4</text><text x="637.4" y="892.4" class="sc">V2</text><text x="555.0" y="868.6" class="sc" textLength="128.7">SINE(0 .35 19k)</text><text x="629.0" y="912.5" class="sc">AC 1</text><text x="555.0" y="930.4" class="sc" textLength="128.7">SINE(0 .35 20k)</text><text x="732.4" y="879.2" class="sc" textLength="230.0">PULSE(0 .5 0 1n 1n 25u 50u)</text><text x="732.4" y="899.6" class="sc">AC 1</text><text x="770.2" y="874.3" class="sc">R1</text><text x="770.2" y="889.9" class="sc">3k</text><text x="827.3" y="874.3" class="sc">C1</text><text x="827.3" y="898.8" class="sc">1m</text></svg>
</body></html>
